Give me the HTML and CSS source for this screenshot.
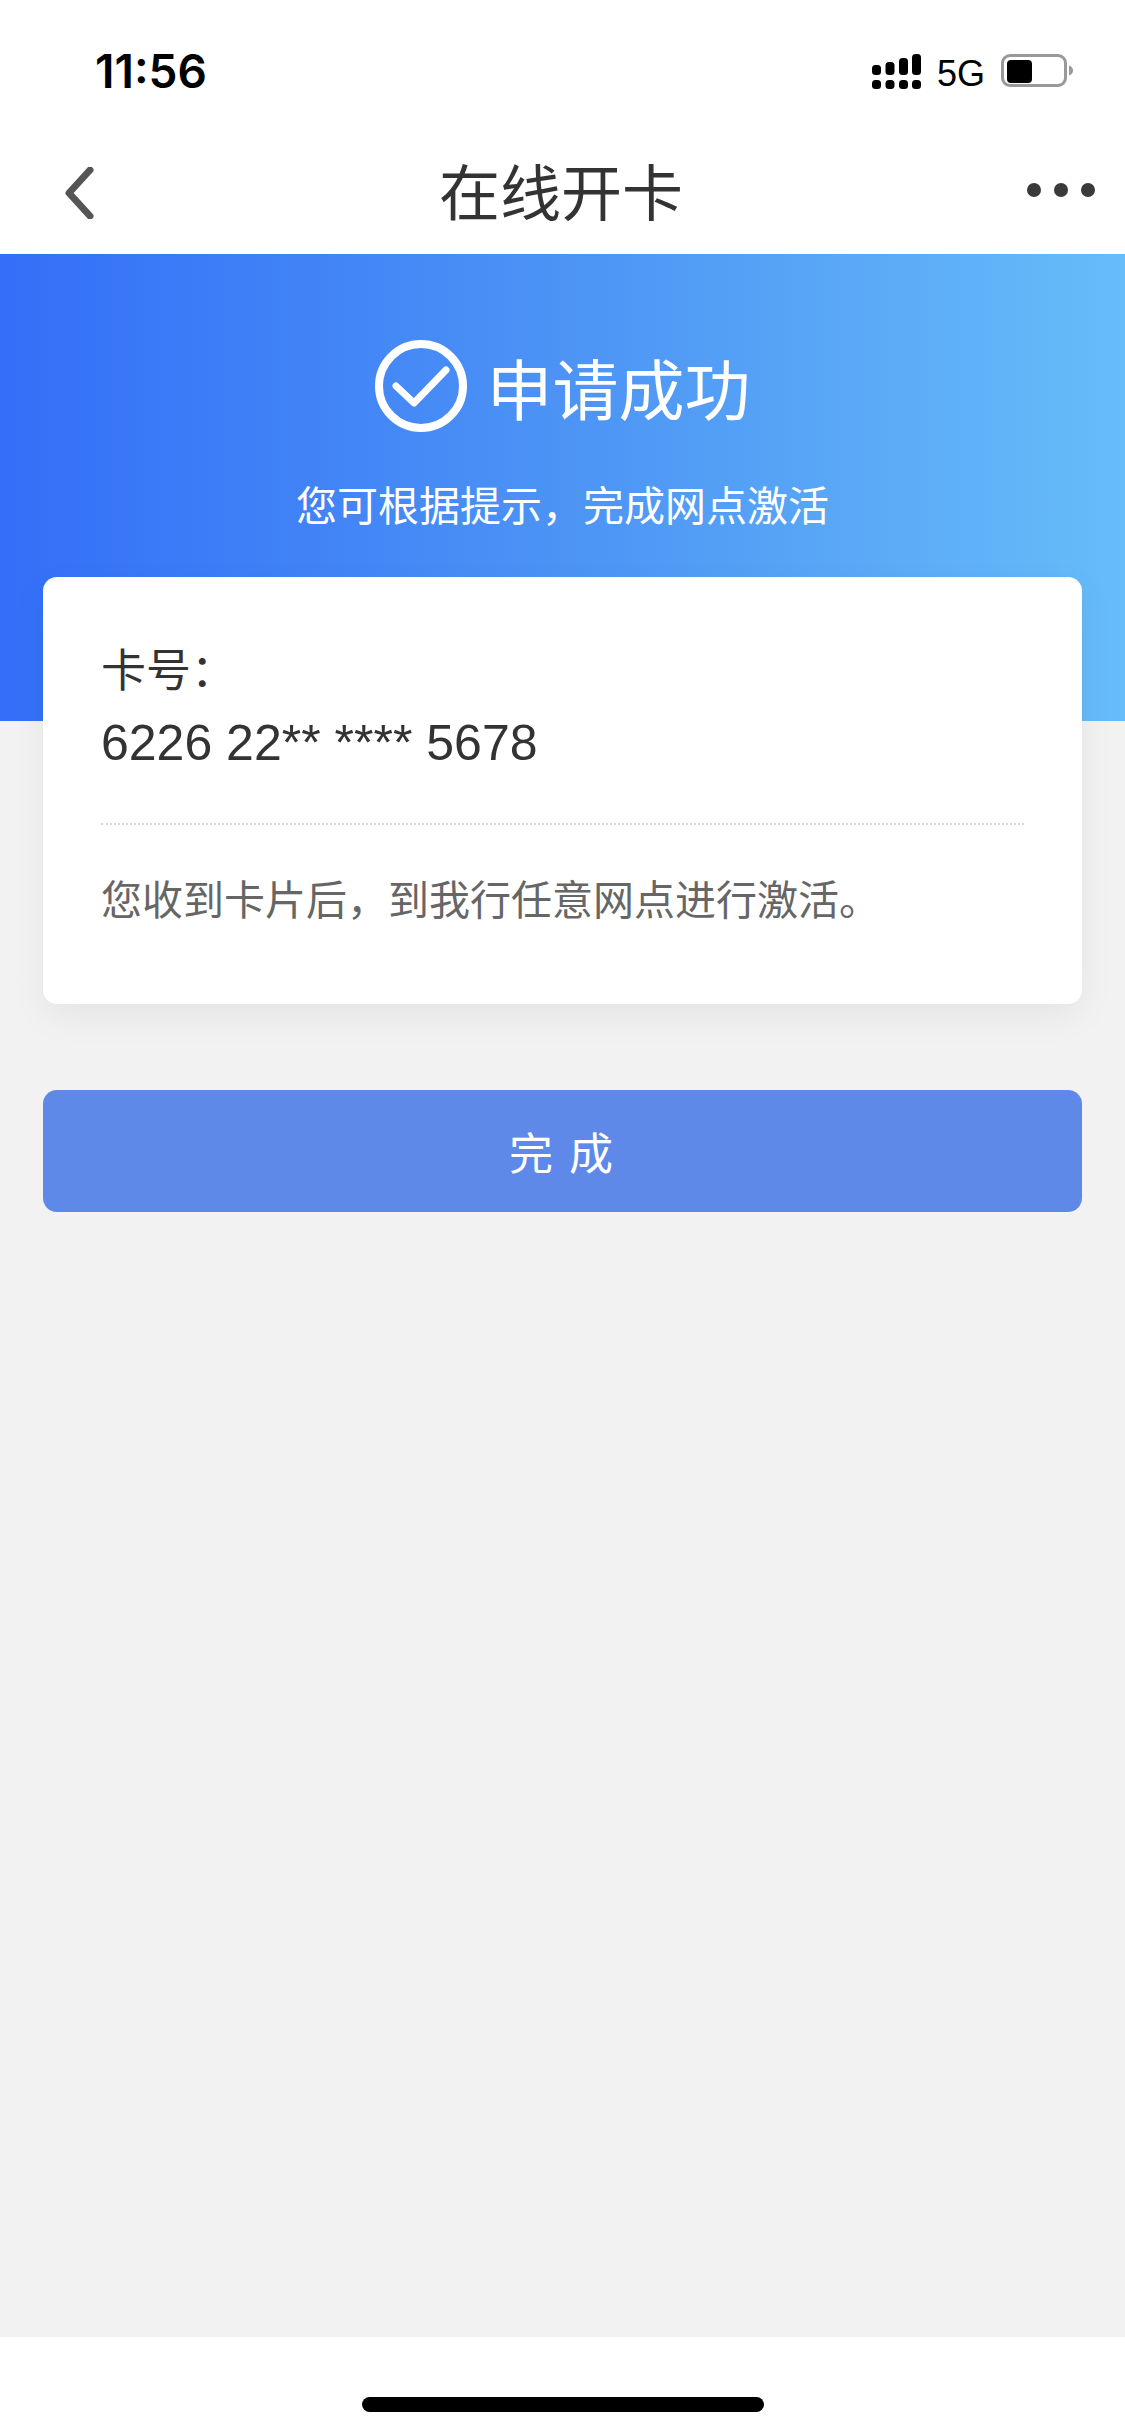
FILE: index.html
```html
<!DOCTYPE html>
<html lang="zh-CN">
<head>
    <meta charset="UTF-8">
    <meta name="viewport" content="width=device-width, initial-scale=1.0">
    <title>在线开卡</title>
    <link rel="stylesheet" href="styles.css">
</head>
<body>
    <header class="top">
        <div class="status-bar">
            <span class="time">11:56</span>
            <div class="status-icons">
                <svg class="signal" width="49" height="35" viewBox="0 0 49 35" fill="#000">
                    <rect x="0" y="11" width="9" height="10" rx="3.5"/>
                    <rect x="13.5" y="8" width="9" height="13" rx="3.5"/>
                    <rect x="27" y="4" width="9" height="17" rx="3.5"/>
                    <rect x="40" y="0" width="9" height="21" rx="3.5"/>
                    <rect x="0" y="26" width="9" height="9" rx="3.5"/>
                    <rect x="13.5" y="26" width="9" height="9" rx="3.5"/>
                    <rect x="27" y="26" width="9" height="9" rx="3.5"/>
                    <rect x="40" y="26" width="9" height="9" rx="3.5"/>
                </svg>
                <span class="network">5G</span>
                <svg class="battery" width="72" height="33" viewBox="0 0 72 33">
                    <rect x="1.5" y="1.5" width="63" height="30" rx="7.5" fill="none" stroke="#999" stroke-width="3"/>
                    <rect x="6" y="6" width="25" height="23" rx="4" fill="#000"/>
                    <path d="M68 11.5c2.500.8 4 2.600 4 5s-1.500 4.200-4 5z" fill="#999"/>
                </svg>
            </div>
        </div>
        <nav class="nav-bar">
            <svg class="back" width="34" height="52" viewBox="0 0 34 52" fill="none">
                <path d="M29 3L8 26l21 23" stroke="#555" stroke-width="7" stroke-linecap="round" stroke-linejoin="round"/>
            </svg>
            <h1 class="nav-title">在线开卡</h1>
            <div class="more">
                <span class="dot"></span>
                <span class="dot"></span>
                <span class="dot"></span>
            </div>
        </nav>
    </header>

    <main class="content">
        <section class="hero">
            <div class="result">
                <svg class="check" width="92" height="92" viewBox="0 0 92 92" fill="none">
                    <circle cx="46" cy="46" r="42" stroke="#fff" stroke-width="8"/>
                    <path d="M21 46l18 17 32-33" stroke="#fff" stroke-width="7" stroke-linecap="round" stroke-linejoin="round"/>
                </svg>
                <span class="result-title">申请成功</span>
            </div>
            <p class="result-tip">您可根据提示&#xFF0C;完成网点激活</p>
        </section>

        <section class="card">
            <div class="card-label">卡号&#xFF1A;</div>
            <div class="card-number">6226 22** **** 5678</div>
            <div class="card-line"></div>
            <p class="card-note">您收到卡片后&#xFF0C;到我行任意网点进行激活。</p>
        </section>

        <button class="done-btn" type="button">完 成</button>
    </main>

    <footer class="home-area">
        <div class="home-bar"></div>
    </footer>
</body>
</html>
```

FILE: styles.css
```css
* {
    box-sizing: border-box;
}

html,
body {
    margin: 0;
    padding: 0;
}

body {
    width: 1125px;
    height: 2435px;
    display: flex;
    flex-direction: column;
    background-color: #f2f2f2;
    font-family: "Liberation Sans", "Noto Sans CJK SC", sans-serif;
    color: #333;
    overflow: hidden;
}

.top {
    height: 254px;
    background-color: #fff;
}

.status-bar {
    height: 132px;
    padding: 48px 52px 0 95px;
    display: flex;
    justify-content: space-between;
    align-items: flex-start;
}

.time {
    font-family: Inter, "Liberation Sans", sans-serif;
    font-size: 46px;
    font-weight: 600;
    line-height: 46px;
    color: #000;
}

.status-icons {
    display: flex;
    align-items: flex-start;
    padding-top: 6px;
}

.signal {
    margin-right: 16px;
}

.network {
    font-size: 36px;
    line-height: 40px;
    color: #000;
    margin-right: 16px;
}

.nav-bar {
    height: 122px;
    padding: 0 30px 6px 61px;
    display: flex;
    align-items: center;
    justify-content: space-between;
}

.back {
    margin-top: 6px;
}

.nav-title {
    margin: 0;
    font-family: "Noto Sans CJK SC", sans-serif;
    font-size: 61px;
    font-weight: 400;
    line-height: 80px;
    color: #333;
}

.more {
    display: flex;
    gap: 13px;
}

.dot {
    width: 14px;
    height: 14px;
    border-radius: 50%;
    background-color: #3a3a3a;
}

.content {
    flex: 1;
}

.hero {
    height: 467px;
    padding-top: 86px;
    background: linear-gradient(90deg, #336ff8 0%, #4f97f5 55%, #66bdf9 100%);
    color: #fff;
    text-align: center;
}

.result {
    display: flex;
    justify-content: center;
    align-items: center;
    gap: 20px;
}

.result-title {
    font-family: "Noto Sans CJK SC", sans-serif;
    font-size: 66px;
    line-height: 92px;
}

.result-tip {
    margin: 41px 0 0;
    font-family: "Noto Sans CJK SC", sans-serif;
    font-size: 41px;
    line-height: 60px;
}

.card {
    height: 427px;
    margin: -144px 43px 0;
    padding: 61px 58px 0;
    background-color: #fff;
    border-radius: 14px;
    box-shadow: 0 12px 36px rgba(0, 0, 0, 0.06);
}

.card-label {
    font-family: "Noto Sans CJK SC", sans-serif;
    font-size: 45px;
    line-height: 60px;
}

.card-number {
    margin-top: 15px;
    font-size: 50px;
    line-height: 60px;
}

.card-line {
    margin-top: 50px;
    border-top: 2px dotted #d6d6d6;
}

.card-note {
    margin: 42px 0 0;
    font-family: "Noto Sans CJK SC", sans-serif;
    font-size: 41px;
    line-height: 60px;
    color: #666;
}

.done-btn {
    display: block;
    width: 1039px;
    height: 122px;
    margin: 86px 43px 0;
    border: 0;
    border-radius: 14px;
    background-color: #5e89e8;
    color: #fff;
    font-family: "Noto Sans CJK SC", sans-serif;
    font-size: 44px;
    letter-spacing: 3px;
}

.home-area {
    height: 98px;
    padding-top: 60px;
    background-color: #fff;
}

.home-bar {
    width: 402px;
    height: 15px;
    margin: 0 auto;
    border-radius: 8px;
    background-color: #000;
}
```
